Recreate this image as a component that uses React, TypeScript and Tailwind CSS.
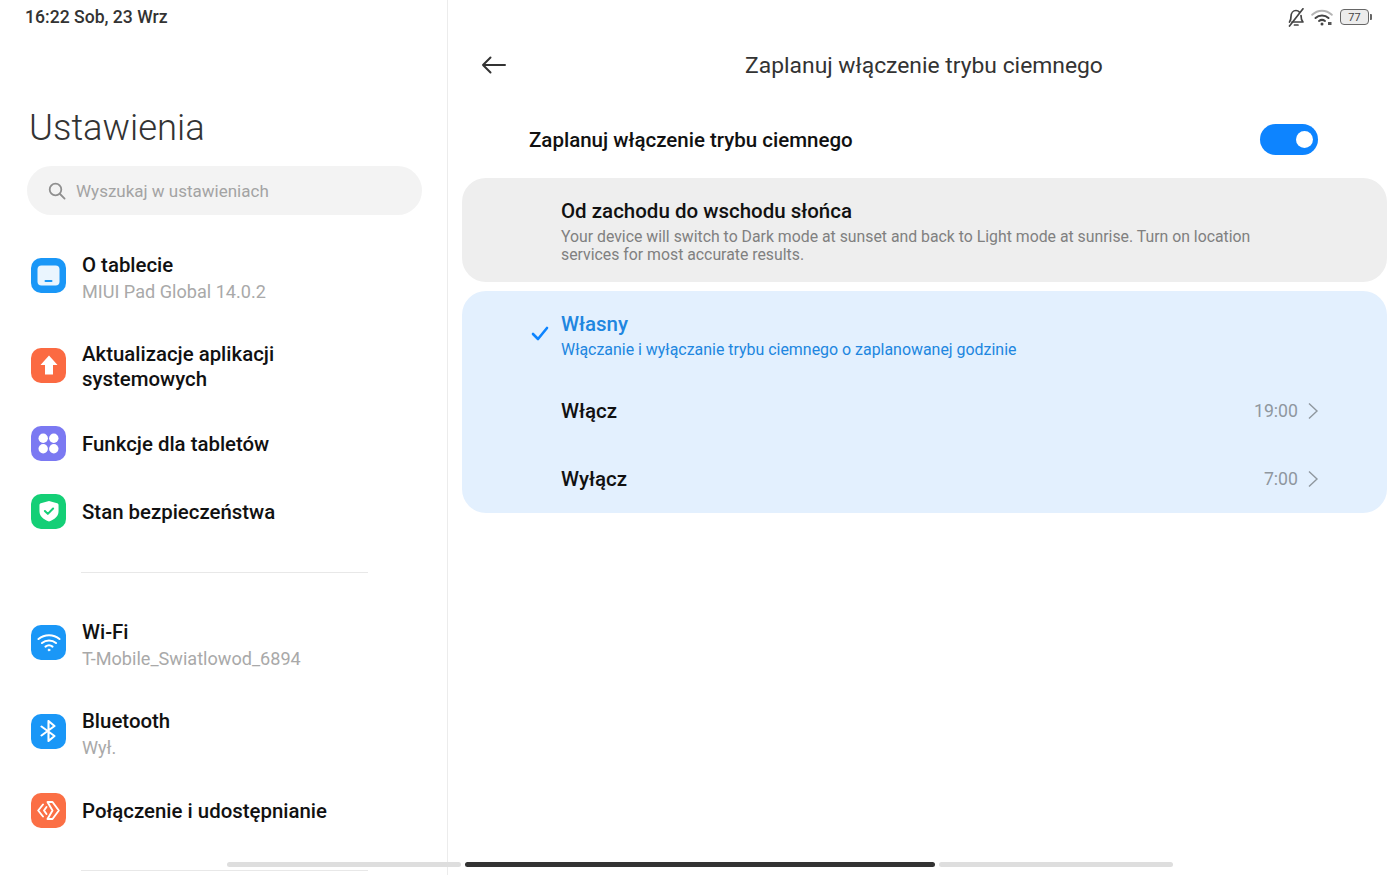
import React from "react";

const BlueTile: React.FC<{ color: string; children: React.ReactNode }> = ({ color, children }) => (
  <div className={`flex h-[35px] w-[35px] shrink-0 items-center justify-center rounded-[10px] ${color}`}>{children}</div>
);

interface RowProps {
  icon: React.ReactNode;
  title: React.ReactNode;
  sub?: string;
  className?: string;
}

const SideRow: React.FC<RowProps> = ({ icon, title, sub, className = "" }) => (
  <div className={`flex h-[68px] items-center pl-[31px] ${className}`}>
    {icon}
    <div className={`ml-[16px] ${sub ? "pt-[7px]" : "pt-[3px]"}`}>
      <div className="text-[20.4px] font-medium leading-[25px] text-[#111111]">{title}</div>
      {sub && <div className="mt-[1px] text-[18.1px] leading-[25px] text-[#a9a9a9]">{sub}</div>}
    </div>
  </div>
);

const Chevron = () => (
  <svg width="11" height="18" viewBox="0 0 11 18" fill="none" stroke="#8f979e" strokeWidth="1.4">
    <path d="M1 1.500 9 9l-8 7.500" />
  </svg>
);

export default function App() {
  return (
    <div className="relative flex h-[875px] w-[1400px] overflow-hidden bg-white font-['Roboto',sans-serif]">
      <aside className="h-full w-[448px] shrink-0 border-r border-[#ececec]">
        <div className="pl-[25px] pt-[6px] text-[17.6px] font-medium leading-[22px] text-[#333333]">16:22 Sob, 23 Wrz</div>
        <h1 className="ml-[29px] mt-[77px] text-[36.4px] font-light leading-[46px] text-[#333333]">Ustawienia</h1>
        <div className="ml-[27px] mt-[15px] flex h-[49px] w-[395px] items-center rounded-full bg-[#f3f3f3] pl-[21px]">
          <svg width="18" height="18" viewBox="0 0 18 18" fill="none" stroke="#8f8f8f" strokeWidth="1.8" strokeLinecap="round">
            <circle cx="7.5" cy="7.5" r="5.8" />
            <path d="m12 12 4.600 4.600" />
          </svg>
          <span className="ml-[10px] pt-[2px] text-[17px] text-[#a3a3a3]">Wyszukaj w ustawieniach</span>
        </div>

        <SideRow
          className="mt-[26px]"
          title="O tablecie"
          sub="MIUI Pad Global 14.0.2"
          icon={
            <BlueTile color="bg-[#1a97f7]">
              <svg width="23" height="21" viewBox="0 0 23 21">
                <rect x="0.5" y="0.5" width="22" height="20" rx="4" fill="#eaf5fe" />
                <rect x="7.500" y="15" width="8" height="2" rx="1" fill="#1a97f7" />
              </svg>
            </BlueTile>
          }
        />
        <SideRow
          className="mt-[22px]"
          title={<>Aktualizacje aplikacji<br />systemowych</>}
          icon={
            <BlueTile color="bg-[#fb6a42]">
              <svg width="18" height="20" viewBox="0 0 18 20">
                <path d="M9 0.500 17.500 10H13v9.500H5V10H0.500z" fill="#ffffff" />
              </svg>
            </BlueTile>
          }
        />
        <SideRow
          className="mt-[10px]"
          title="Funkcje dla tabletów"
          icon={
            <BlueTile color="bg-[#7b79f2]">
              <svg width="21" height="21" viewBox="0 0 21 21" fill="#ffffff">
                <circle cx="5.200" cy="5.200" r="4.700" />
                <circle cx="15.800" cy="5.200" r="4.700" />
                <circle cx="5.200" cy="15.800" r="4.700" />
                <circle cx="15.800" cy="15.800" r="4.700" />
              </svg>
            </BlueTile>
          }
        />
        <SideRow
          title="Stan bezpieczeństwa"
          icon={
            <BlueTile color="bg-[#14cf76]">
              <svg width="20" height="22" viewBox="0 0 22 24">
                <path d="M11 1 20 3.500c1 .3 1.500 1 1.500 2V12c0 6-4.500 9.500-10.500 11.500C5 21.500.5 18 .5 12V5.500c0-1 .5-1.700 1.500-2z" fill="#ffffff" />
                <path d="m6.500 12 3.200 3.200 5.800-6" fill="none" stroke="#14cf76" strokeWidth="2.200" strokeLinecap="round" strokeLinejoin="round" />
              </svg>
            </BlueTile>
          }
        />

        <div className="ml-[81px] mt-[27px] h-px w-[287px] bg-[#e8e8e8]" />

        <SideRow
          className="mt-[35px]"
          title="Wi-Fi"
          sub="T-Mobile_Swiatlowod_6894"
          icon={
            <BlueTile color="bg-[#1a97f7]">
              <svg width="24" height="19" viewBox="0 0 24 19" fill="none" stroke="#ffffff" strokeWidth="2.100" strokeLinecap="round">
                <path d="M1.500 6c6-5 15-5 21 0" />
                <path d="M5 10c4-3.300 10-3.300 14 0" />
                <path d="M8.500 13.600c2-1.500 5-1.500 7 0" />
                <circle cx="12" cy="17" r="0.900" fill="#ffffff" strokeWidth="1" />
              </svg>
            </BlueTile>
          }
        />
        <SideRow
          className="mt-[21px]"
          title="Bluetooth"
          sub="Wył."
          icon={
            <BlueTile color="bg-[#1a97f7]">
              <svg width="17" height="22" viewBox="0 0 17 22" fill="none" stroke="#ffffff" strokeWidth="2.100" strokeLinecap="round" strokeLinejoin="round">
                <path d="m1.500 6.500 13 9.500-6 5V1l6 5-13 9.500" />
              </svg>
            </BlueTile>
          }
        />
        <SideRow
          className="mt-[11px]"
          title="Połączenie i udostępnianie"
          icon={
            <BlueTile color="bg-[#fb6f45]">
              <svg width="23" height="19" viewBox="0 0 23 19" fill="none" stroke="#ffffff" strokeWidth="1.900" strokeLinejoin="round" strokeLinecap="round">
                <path d="M6 3.500 1.200 9.500 6 15.500" />
                <path d="M10.500 1H15.500L21.800 9.500 15.500 18H10.500L15.500 9.500z" />
                <path d="M9.500 6 7 9.500l2.500 3.500" />
              </svg>
            </BlueTile>
          }
        />

        <div className="ml-[81px] mt-[26px] h-px w-[287px] bg-[#e8e8e8]" />
      </aside>

      <main className="flex-1">
        <div className="flex h-[34px] items-center justify-end gap-[7px] pr-[28px]">
          <svg className="mr-[-1px]" width="18" height="19" viewBox="0 0 18 19" fill="none" stroke="#444444" strokeWidth="1.700" strokeLinecap="round" strokeLinejoin="round">
            <path d="M2.500 14c1.200-1.500 1.500-3 1.500-5.500C4 5 6.200 2.500 9 2.500c1.300 0 2.500.5 3.300 1.500M14 7.500c0 2.500.5 5 2 6.500H5" />
            <path d="M7.500 17h3.500" />
            <path d="M16 .8 2.500 18" />
          </svg>
          <svg width="22" height="17" viewBox="0 0 22 17" fill="none" strokeLinecap="round">
            <path d="M1.200 5.800c5.600-5.400 13.900-5.400 19.600 0" stroke="#b4b4b4" strokeWidth="1.900" />
            <path d="M4.500 9c3.500-3.200 9.500-3.200 13 0" stroke="#444444" strokeWidth="2" />
            <path d="M8 12c1.700-1.300 4.300-1.300 6 0" stroke="#444444" strokeWidth="2" />
            <circle cx="11" cy="15" r="1.500" fill="#444444" />
            <rect x="17" y="13" width="3.500" height="3" fill="#555555" />
          </svg>
          <div className="flex items-center">
            <div className="flex h-[16px] w-[29px] items-center justify-center rounded-[4px] border-[1.5px] border-[#666666] bg-[#ececec] text-[11px] leading-none text-[#444444]">77</div>
            <div className="ml-[1px] h-[6px] w-[2px] rounded-r-[1px] bg-[#666666]" />
          </div>
        </div>

        <div className="flex h-[63px] items-center pl-[33px] pr-[58px]">
          <svg className="mb-[2px]" width="25" height="18" viewBox="0 0 25 18" fill="none" stroke="#333333" strokeWidth="2" strokeLinecap="round" strokeLinejoin="round">
            <path d="M24 9H2M9.500 1.500 2 9l7.500 7.500" />
          </svg>
          <div className="flex-1 pt-[1px] text-center text-[22.85px] leading-[28px] text-[#333333]">Zaplanuj włączenie trybu ciemnego</div>
        </div>

        <div className="flex h-[81px] items-center justify-between pt-[4px] pl-[81px] pr-[82px]">
          <span className="pt-[2px] text-[20.5px] font-medium text-[#111111]">Zaplanuj włączenie trybu ciemnego</span>
          <div className="flex h-[31px] w-[58px] items-center justify-end rounded-full bg-[#0d84ff] pr-[5px]">
            <div className="h-[17px] w-[17px] rounded-full bg-white" />
          </div>
        </div>

        <section className="ml-[14px] h-[104px] w-[925px] rounded-[24px] bg-[#eeeeee] pl-[99px] pt-[20px]">
          <div className="text-[20.5px] font-medium leading-[26px] text-[#111111]">Od zachodu do wschodu słońca</div>
          <p className="mt-[4px] w-[720px] text-[15.82px] leading-[18px] text-[#808080]">
            Your device will switch to Dark mode at sunset and back to Light mode at sunrise. Turn on location services for most accurate results.
          </p>
        </section>

        <section className="ml-[14px] mt-[9px] h-[222px] w-[925px] rounded-[24px] bg-[#e3f0fe]">
          <div className="relative h-[86px] pl-[99px] pt-[20px]">
            <svg className="absolute left-[69px] top-[35px]" width="18" height="15" viewBox="0 0 18 15" fill="none" stroke="#0d84ff" strokeWidth="2.600" strokeLinecap="round" strokeLinejoin="round">
              <path d="m2 8 5 5 9-11" />
            </svg>
            <div className="text-[20.5px] font-medium leading-[26px] text-[#2086e0]">Własny</div>
            <div className="mt-[2px] text-[15.93px] leading-[22px] text-[#2086e0]">Włączanie i wyłączanie trybu ciemnego o zaplanowanej godzinie</div>
          </div>
          <div className="flex h-[68px] items-center justify-between pl-[99px] pr-[68px]">
            <span className="text-[20.5px] font-medium text-[#111111]">Włącz</span>
            <div className="flex items-center gap-[10px] text-[17.7px] text-[#8f979e]">19:00 <Chevron /></div>
          </div>
          <div className="flex h-[68px] items-center justify-between pl-[99px] pr-[68px]">
            <span className="text-[20.5px] font-medium text-[#111111]">Wyłącz</span>
            <div className="flex items-center gap-[10px] text-[17.7px] text-[#8f979e]">7:00 <Chevron /></div>
          </div>
        </section>
      </main>

      <div className="absolute left-[227px] top-[862px] flex gap-[4px]">
        <div className="h-[5px] w-[234px] rounded-full bg-[#dedede]" />
        <div className="h-[5px] w-[470px] rounded-full bg-[#333333]" />
        <div className="h-[5px] w-[234px] rounded-full bg-[#dedede]" />
      </div>
    </div>
  );
}
